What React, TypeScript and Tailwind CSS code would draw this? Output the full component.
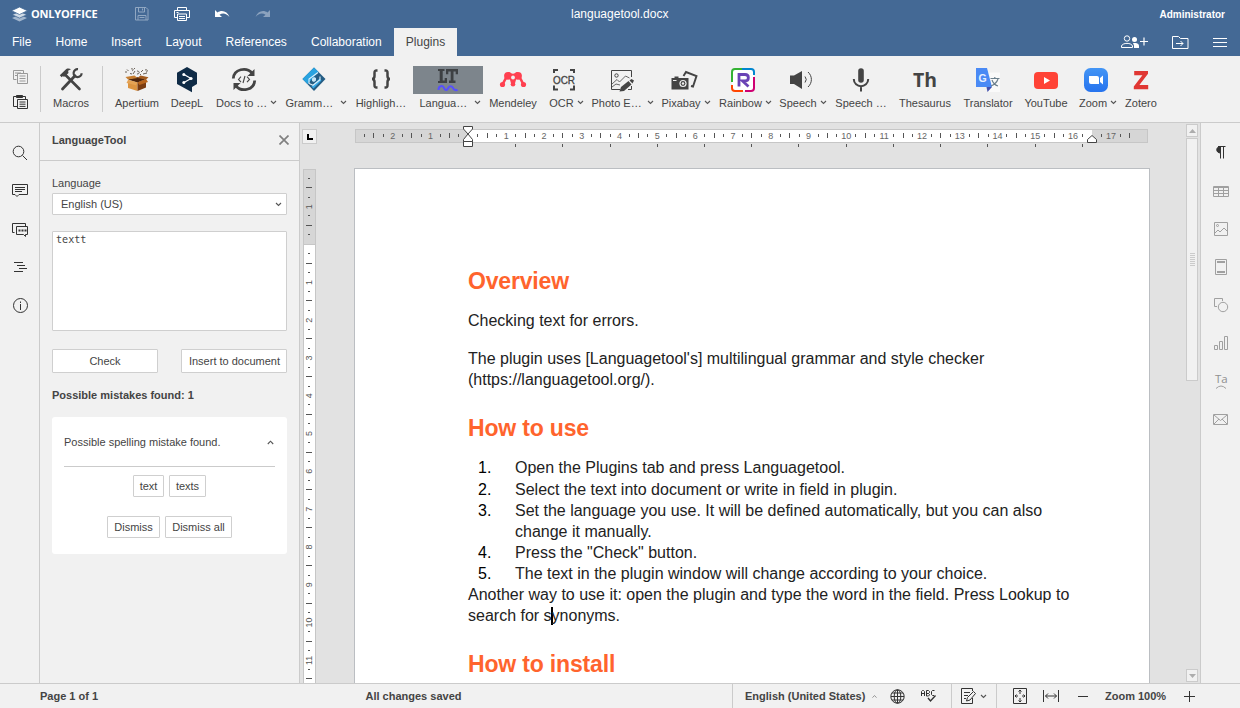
import React from "react";

const CM = 37.795;
const range = (a: number, b: number) => Array.from({ length: b - a + 1 }, (_, i) => a + i);

function Caret({ up = false, className = "" }: { up?: boolean; className?: string }) {
  return (
    <svg width="7" height="5" viewBox="0 0 7 5" className={"shrink-0 " + className} fill="none" stroke="#555" strokeWidth="1.1">
      <path d={up ? "M.8 4 3.5 1.2 6.2 4" : "M1 1 3.5 3.5 6 1"} />
    </svg>
  );
}

const g = "#444444";

const icons: Record<string, React.ReactNode> = {
  macros: (
    <g>
      <path d="M8 8.5 22.500 23" stroke={g} strokeWidth="2.600" strokeLinecap="round" />
      <path d="M2.800 9.200 9.300 2.900c2-.7 3.600-.3 4.700.4l-2.900 1.400.4 2.200-4.200 3.800-1.800-.5-.8 1.100z" fill={g} />
      <path d="M5.500 23 18 9.800" stroke={g} strokeWidth="2.800" strokeLinecap="round" />
      <path d="M21 3.200a4 4 0 1 0 3.600 4" stroke={g} strokeWidth="2.200" fill="none" />
    </g>
  ),
  apertium: (
    <g>
      <path d="M5 14 14.5 16.5V25L5 22z" fill="#dc9440" />
      <path d="M14.5 16.5 23 13v8.5L14.5 25z" fill="#7a3c12" />
      <path d="M5 13.5 13.5 11l9.5 2-8.5 3.5z" fill="#4d250c" />
      <path d="M5 13.5 2.500 11l9-1.500 3 2.500z" fill="#c77f32" />
      <path d="m14.5 12 3-2.500 8 1.700-2.500 2.300z" fill="#a25a1d" />
      <path d="m5 14-1.500 3 9.500 2.300 1.500-2.800z" fill="#e5a354" />
      <path d="m14.5 16.5 2 2.500 8.500-3-2-3z" fill="#b8651d" />
      <path d="M2 6h2M4 3.500l1.500 1.500M8 3c2-1 3 1 1 2M12 5l-2 3M7 7.500l2 .5M14 5c3 0 3 3 0 3M18 6l2-2M22 4c3-1 3 2 1 2M20 8l4-1M17 8l1 1M11 2l1 1" stroke="#6b6259" strokeWidth="1" fill="none" />
    </g>
  ),
  deepl: (
    <g>
      <path d="M14 1 24 6.800V18l-5 3v5.300L14 23.600 4 18V6.800z" fill="#0f2b46" />
      <path d="M11 8.500 18 12.500 11 16.500" stroke="#fff" strokeWidth="1.200" fill="none" />
      <circle cx="10.800" cy="8.400" r="1.500" fill="#fff" /><circle cx="18" cy="12.500" r="1.600" fill="#fff" /><circle cx="10.800" cy="16.600" r="1.500" fill="#fff" />
    </g>
  ),
  docs: (
    <g fill="none" stroke={g}>
      <path d="M3.300 12.500c.5-9.500 13-12 18.700-5.500M24.700 14.500c-.5 9.500-13 12-18.700 5.500" strokeWidth="2.800" />
      <path d="M24.500 3v7h-7zM3.500 24v-7h7z" fill={g} stroke="none" />
      <path d="m11 10.700-2.500 2.700 2.500 2.700M17 10.700l2.500 2.700-2.500 2.700M15 10l-2 7" strokeWidth="1.100" />
    </g>
  ),
  grammar: (
    <g>
      <path d="M14 1.500 25.500 13 14 25 2.500 13z" fill="#245d84" />
      <path d="M14 1.500 18.500 6 7.500 18 2.500 13z" fill="#29a3e0" />
      <path d="M19.500 12.500 11.500 20.500 13.500 22.500 21.500 14.500z" fill="#36a9e8" />
      <path d="M18 6.500 9 13v4.500l4 1.800 7-5.500v-3.300" fill="none" stroke="#dceff9" strokeWidth="1.100" />
      <path d="m14 11 2 1v2.500L14 16l-2-1v-2.500z" fill="#c4e4f4" />
    </g>
  ),
  highlight: (
    <path d="M10.500 4.500H9.500c-2 0-2 1-2 2.500v3c0 2-.5 3-2.500 3 2 0 2.500 1 2.500 3v3c0 1.500 0 2.500 2 2.500h1M17.500 4.500h1c2 0 2 1 2 2.500v3c0 2 .5 3 2.500 3-2 0-2.500 1-2.500 3v3c0 1.500 0 2.500-2 2.500h-1" fill="none" stroke={g} strokeWidth="2.500" />
  ),
  lt: (
    <g>
      <path d="M4 3h6.500v2h-1.800v9.500h2V12h2.300v5H4v-2h1.700V5H4z" fill="#3d4043" />
      <path d="M12 3h12v5.300h-2.300V5.500h-2.200v9h2v2.500h-6.500v-2.500h1.700v-9h-2.400V8.300H12z" fill="#3d4043" />
      <path d="M4.500 24c0-4.500 4-5 5.500-2s3 2.500 4.200 0 3.500-2.500 4.800 0 3.500 2.500 4.500 1.500" stroke="#574fff" strokeWidth="2" fill="none" />
    </g>
  ),
  mendeley: (
    <g fill="#ff4050">
      <path d="M3.500 18.500 8 10M24.500 18.500 20 10M12 12.500 13.500 18M16 12.500 14.500 18" fill="none" stroke="#ff4050" strokeWidth="2.600" />
      <circle cx="9" cy="9.800" r="3.900" /><circle cx="19" cy="9.800" r="3.900" />
      <path d="M9 6c2.500 0 3 1.800 5 1.800S16.500 6 19 6v5c-2 0-2.500 5-5 5s-3-5-5-5z" />
      <circle cx="14" cy="11.500" r="1.900" fill="#f0f0f0" />
      <circle cx="3.500" cy="18.500" r="2.600" /><circle cx="14" cy="18.300" r="2.300" /><circle cx="24.500" cy="18.500" r="2.600" />
    </g>
  ),
  ocr: (
    <g>
      <path d="M4 7V4h4M20 4h4v3M24 19.500V23.500h-4M8 23.500H4v-4" stroke={g} strokeWidth="2" fill="none" />
      <text x="3" y="17.500" textLength="22" lengthAdjust="spacingAndGlyphs" fontFamily="Liberation Sans, sans-serif" fontSize="10" fill={g} stroke={g} strokeWidth=".3">OCR</text>
    </g>
  ),
  photo: (
    <g fill="none" stroke={g}>
      <path d="M12 23.500H3.500V4.500h20V11M23.500 20v3.500H20" strokeWidth="1" />
      <circle cx="8.500" cy="9.500" r="1.700" />
      <path d="m4 18 5-4.500 2.500 2.500 6-6 4 2M4 21l4-3 4 1" strokeWidth=".8" />
      <path d="m11.500 25.500 1.500-4.500 7.500-6 3 3.500-7.500 6.500z" fill={g} stroke="none" />
      <path d="m21.500 14.500 2-1.500 2.500 1.500-1.500 3z" fill={g} stroke="none" />
    </g>
  ),
  pixabay: (
    <g>
      <path d="m13.500 10 2.500-4 10.500 4-3.500 10.500-2-.5" stroke={g} strokeWidth="1.900" fill="none" />
      <path d="M1.500 12h3v-1.500h4V12h10V23.500h-17z" fill={g} />
      <circle cx="13" cy="17.500" r="3.600" fill="#f0f0f0" /><circle cx="13" cy="17.500" r="2.400" fill={g} /><circle cx="13" cy="17.500" r="1.200" fill="#f0f0f0" />
      <path d="M3 14.500h3.500" stroke="#f0f0f0" />
    </g>
  ),
  rainbow: (
    <g fill="none" strokeWidth="2">
      <rect x="3" y="3" width="22" height="22" rx="4" fill="#fff" stroke="none" />
      <path d="M3 16V6a3 3 0 0 1 3-3h7" stroke="#34b233" /><path d="M13 3h9a3 3 0 0 1 3 3v3" stroke="#0086cf" />
      <path d="M25 11v11a3 3 0 0 1-3 3h-6" stroke="#cf0072" /><path d="M14 25H6a3 3 0 0 1-3-3v-3" stroke="#ff4500" />
      <path d="M10 20.500V8.500h6c4.500 0 4.500 6.500 0 6.500h-2.500l6 5.500" stroke="#6a43b5" strokeWidth="2.800" />
    </g>
  ),
  speaker: (
    <g>
      <path d="M3 9.500h4L15 5v18L7 18H3z" fill={g} />
      <path d="M18 10.500q2.500 3 0 6M21 6c4.500 4 4.500 11 0 15" stroke={g} strokeWidth="1" fill="none" />
    </g>
  ),
  mic: (
    <g fill="none" stroke={g}>
      <path d="M14 5v9" strokeWidth="5.600" strokeLinecap="round" />
      <path d="M6.800 13c0 9.500 14.400 9.500 14.400 0M14 20v5.500" strokeWidth="2" />
    </g>
  ),
  th: <text x="2" y="21" textLength="24" lengthAdjust="spacingAndGlyphs" fontFamily="Open Sans, sans-serif" fontSize="20" fontWeight="700" fill={g}>Th</text>,
  translate: (
    <g>
      <path d="M13 6.500h13V26H15z" fill="#fafafa" />
      <path d="M2 2h11l5 19H2z" fill="#4a8af5" />
      <path d="M12.500 21H18l-4.500 5z" fill="#4250af" />
      <text x="4.500" y="15.500" fontFamily="Liberation Sans, sans-serif" fontWeight="700" fontSize="10.500" fill="#e8f0fe">G</text>
      <path d="M16.500 12.500h9M20.800 11v1.500M24 13c-1 3-3.500 5.500-7 7M18 14c1 3 3 5 6 6" stroke="#6b7f8c" strokeWidth="1.200" fill="none" />
    </g>
  ),
  youtube: (
    <g><rect x="2" y="6" width="24" height="17" rx="4" fill="#ff4336" /><path d="m12 11 6 3.500-6 3.500z" fill="#fff" /></g>
  ),
  zoom: (
    <g>
      <defs><linearGradient id="zm" x1="0" y1="0" x2="0" y2="1"><stop stopColor="#4395f5" /><stop offset="1" stopColor="#2673ee" /></linearGradient></defs>
      <rect x="2" y="2" width="24" height="24" rx="6.500" fill="url(#zm)" />
      <path d="M7 10h8q2 0 2 2v6H9q-2 0-2-2zM18 12l3-2.500v9L18 16z" fill="#fff" />
    </g>
  ),
  zotero: <path d="M7.200 5h13.800v2.800l-8.600 11.300h8.800V23.300H6.800v-2.800l8.600-11.300H7.200z" fill="#e03733" />,
};

type Tool = { icon: string; label: string; w: string; lw: string; caret?: boolean; active?: boolean };
const tools: Tool[] = [
  { icon: "apertium", label: "Apertium", w: "w-[56px]", lw: "" },
  { icon: "deepl", label: "DeepL", w: "w-[44px]", lw: "" },
  { icon: "docs", label: "Docs to …", w: "w-[70px]", lw: "ml-[5px] w-[51px]", caret: true },
  { icon: "grammar", label: "Gramm…", w: "w-[70px]", lw: "ml-[4px] w-[51px]", caret: true },
  { icon: "highlight", label: "Highligh…", w: "w-[64px]", lw: "" },
  { icon: "lt", label: "Langua…", w: "w-[70px]", lw: "ml-[4px] w-[51px]", caret: true, active: true },
  { icon: "mendeley", label: "Mendeley", w: "w-[60px]", lw: "" },
  { icon: "ocr", label: "OCR", w: "w-[42px]", lw: "ml-[5px]", caret: true },
  { icon: "photo", label: "Photo E…", w: "w-[74px]", lw: "ml-[1px] w-[52px]", caret: true },
  { icon: "pixabay", label: "Pixabay", w: "w-[50px]", lw: "ml-[4px]", caret: true },
  { icon: "rainbow", label: "Rainbow", w: "w-[68px]", lw: "ml-[5px]", caret: true },
  { icon: "speaker", label: "Speech", w: "w-[48px]", lw: "ml-[4px]", caret: true },
  { icon: "mic", label: "Speech …", w: "w-[72px]", lw: "" },
  { icon: "th", label: "Thesaurus", w: "w-[56px]", lw: "" },
  { icon: "translate", label: "Translator", w: "w-[70px]", lw: "" },
  { icon: "youtube", label: "YouTube", w: "w-[46px]", lw: "" },
  { icon: "zoom", label: "Zoom", w: "w-[54px]", lw: "ml-[4px]", caret: true },
  { icon: "zotero", label: "Zotero", w: "w-[36px]", lw: "" },
];

function ToolButton({ t }: { t: Tool }) {
  return (
    <div className={`${t.w} flex shrink-0 flex-col items-center pt-[10px]`}>
      <div className={`flex h-7 items-center justify-center ${t.active ? "w-[70px] bg-[#7d858c]" : "w-7"}`}>
        <svg width="28" height="28" viewBox="0 0 28 28">{icons[t.icon]}</svg>
      </div>
      <div className="mt-[2px] flex items-center gap-[3px] whitespace-nowrap text-[11px] leading-[14px] text-[#444]">
        <span className={t.lw}>{t.label}</span>
        {t.caret && <Caret className="-mt-px" />}
      </div>
    </div>
  );
}

function Header() {
  return (
    <header className="flex h-14 shrink-0 flex-col bg-[#446995] text-white">
      <div className="grid h-7 grid-cols-[571px_1fr_auto] items-center pr-[15px]">
        <div className="flex items-center pl-[12px]">
          <svg width="16" height="15" viewBox="0 0 16 15">
            <path d="m7.500 7.800 7.500 3.100-7.500 3.500L0 10.900z" fill="#a4b7ce" />
            <path d="m7.500 4.500 7.500 3.200-7.500 3.400L0 7.700z" fill="#cfdae6" stroke="#446995" strokeWidth=".8" />
            <path d="M7.500 0 15.500 3.700 7.500 7.500-.5 3.700z" fill="#fff" stroke="#446995" strokeWidth=".8" />
          </svg>
          <span className="ml-[3px] w-[104px] font-['Open_Sans',sans-serif] text-[11px] font-bold leading-[14px] tracking-[-0.2px]">ONLYOFFICE</span>
          <svg width="14" height="14" viewBox="0 0 14 14" fill="none" stroke="#90a7c2">
            <path d="M.500.500h10.500l2 2v10.500H.500zM3.500 1v4h6V1M7.500 1.500v2M3 13V8.500h8V13M4.500 10.500h5" />
          </svg>
          <svg width="16" height="14" viewBox="0 0 16 14" fill="none" stroke="#fff" className="ml-[25px]">
            <path d="M3.500 3.500v-3h9v3M3.500 10.500h-3v-7h15v7h-3M3.500 7h9v6.500h-9zM5 9.500h6M5 11.500h6M2.500 5.500h2" />
          </svg>
          <svg width="15" height="10" viewBox="0 0 15 10" className="ml-[25px] mt-[2px]"><path d="M0 0v7h7L4.500 4.700C8 2.200 11.500 3.500 14.500 7 12.500 1 6.500-.5 2.500 2.500z" fill="#fff" /></svg>
          <svg width="15" height="10" viewBox="0 0 15 10" className="ml-[25px] mt-[2px]"><path d="M15 0v7H8l2.500-2.300C7 2.200 3.500 3.500.5 7 2.500 1 8.500-.5 12.500 2.500z" fill="#8ba2be" /></svg>
        </div>
        <span className="text-[12px]">languagetool.docx</span>
        <span className="text-[10px] font-bold">Administrator</span>
      </div>
      <div className="flex h-7 items-center text-[12px]">
        <span className="w-[43px] pl-[12px]">File</span>
        <span className="w-[68px] pl-[12.500px]">Home</span>
        <span className="w-[54.500px]">Insert</span>
        <span className="w-[60px]">Layout</span>
        <span className="w-[85.500px]">References</span>
        <span className="w-[83px]">Collaboration</span>
        <span className="flex h-7 w-[63px] items-center justify-center bg-[#f1f1f1] text-[#444]">Plugins</span>
        <div className="flex-1" />
        <svg width="28" height="14" viewBox="0 0 28 14" fill="none" stroke="#fff">
          <circle cx="6" cy="3.500" r="2.700" /><path d="M.500 12.500v-1.500c1-3.500 10-3.500 11 0v1.500z" />
          <circle cx="13.500" cy="4.500" r="2.500" fill="#fff" stroke="none" /><path d="M12 8h3q3 .5 3 3v2h-5v-2.500z" fill="#fff" stroke="none" />
          <path d="M19 6.500h8M23 2.500v8" strokeWidth="1.200" />
        </svg>
        <svg width="17" height="14" viewBox="0 0 17 14" fill="none" stroke="#fff" className="ml-[23px] mt-px">
          <path d="M.5 12.500V.500h6l2 2h7.500v10z" /><path d="M4 7.500h7M8.500 5 11 7.500 8.500 10" />
        </svg>
        <svg width="15" height="11" viewBox="0 0 15 11" stroke="#fff" className="ml-[24px] mr-[12px]"><path d="M0 1.500h14M0 5.500h14M0 9.500h14" /></svg>
      </div>
    </header>
  );
}

function Toolbar() {
  return (
    <div className="flex h-[67px] shrink-0 border-b border-[#cbcbcb] bg-[#f1f1f1]">
      <div className="flex w-[40px] flex-col items-center gap-[11px] pt-[14px]">
        <svg width="15" height="14" viewBox="0 0 15 14" fill="none" stroke="#999"><path d="M3.500 9.500h-3v-9h10v3M4.500 3.500h10v10h-10zM2 3h6M2 5.500h2M6.500 6h6M6.500 8.500h6M6.500 11h6" /></svg>
        <svg width="15" height="15" viewBox="0 0 15 15" fill="none" stroke="#333"><path d="M4 11.500H.5v-10H3M10 1.500h2.500V4M4.500 4.500h10v9H4.500zM6.500 7h6M6.500 9.200h6M6.500 11.400h6" /><path d="M3.500.500h6v2h-6z" fill="#333" /></svg>
      </div>
      <div className="mt-[10px] h-[46px] w-px bg-[#cbcbcb]" />
      <div className="flex w-[61px] justify-center pr-px"><ToolButton t={{ icon: "macros", label: "Macros", w: "w-[56px]", lw: "" }} /></div>
      <div className="mr-[6px] mt-[10px] h-[46px] w-px bg-[#cbcbcb]" />
      {tools.map((t) => <ToolButton key={t.icon} t={t} />)}
    </div>
  );
}

function Cell({ children }: { children: React.ReactNode }) {
  return <div className="flex h-[38px] items-center justify-center">{children}</div>;
}

function LeftBar() {
  return (
    <nav className="w-[40px] shrink-0 border-r border-[#cbcbcb] bg-[#f1f1f1] pt-[12px]">
      {[
        <g key="a"><circle cx="8.500" cy="7.500" r="5.300" /><path d="m12.500 11.500 4.500 4.500" /></g>,
        <g key="b"><path d="M2.500 2.500h15v10H9l-2 2-2-2H2.500zM5 5.500h10M5 7.500h10M5 9.500h7" /></g>,
        <g key="c"><path d="M4.500 12.500h-2v-9h13v3M6.500 6.500h11v8h-2v2l-2-2h-7z" /><path d="M8.500 10.500h8" strokeWidth="2" strokeDasharray="2 1" /></g>,
        <g key="d"><path d="M4 4.500h9M7 7.500h8M9 10.500h8M4 13.500h9" /></g>,
        <g key="e"><circle cx="10.500" cy="9.500" r="7" /><path d="M10.500 8v6M10.500 5.500V7" /></g>,
      ].map((x, i) => (
        <Cell key={i}><svg width="20" height="20" viewBox="0 0 20 20" fill="none" stroke="#333">{x}</svg></Cell>
      ))}
    </nav>
  );
}

function Btn({ className, children }: { className: string; children: React.ReactNode }) {
  return <button className={"flex items-center justify-center whitespace-nowrap rounded-[1px] border border-[#cfcfcf] bg-white " + className}>{children}</button>;
}

function Panel() {
  return (
    <aside className="w-[260px] shrink-0 border-r border-[#cbcbcb] bg-[#f1f1f1] text-[11px] text-[#444]">
      <div className="flex h-[38px] items-center justify-between border-b border-[#cbcbcb] pb-[3px] pl-[12px] pr-[10px] font-bold">
        LanguageTool
        <svg width="10" height="10" viewBox="0 0 10 10" stroke="#808080" strokeWidth="1.700"><path d="m.500.500 9 9M9.500.500l-9 9" /></svg>
      </div>
      <div className="flex flex-col px-[12px] pt-[15px]">
        <div className="h-[17px] leading-[15px]">Language</div>
        <div className="flex h-[22px] w-[235px] items-center justify-between rounded-[1px] border border-[#cfcfcf] bg-white pl-[8px] pr-[4px]">English (US)<Caret /></div>
        <div className="mt-[16px] h-[100px] w-[235px] rounded-[1px] border border-[#cfcfcf] bg-white px-[3px] pt-px font-['DejaVu_Sans_Mono',monospace] text-[10.100px] leading-[14px]">textt</div>
        <div className="mt-[18px] flex w-[235px] justify-between">
          <Btn className="h-[24px] w-[106px]">Check</Btn>
          <Btn className="h-[24px] w-[106px] pl-px">Insert to document</Btn>
        </div>
        <div className="mt-[15px] h-[29px] font-bold leading-[15px]">Possible mistakes found: 1</div>
        <div className="h-[137px] w-[235px] rounded-[3px] bg-white px-[12px]">
          <div className="flex h-[50px] items-center justify-between border-b border-[#cbcbcb] pt-[2px]">Possible spelling mistake found.<Caret up className="mr-px" /></div>
          <div className="mt-[8px] flex justify-center gap-[5px]"><Btn className="h-[22px] w-[31px]">text</Btn><Btn className="h-[22px] w-[37px]">texts</Btn></div>
          <div className="mt-[19px] flex justify-center gap-[5px]"><Btn className="h-[22px] w-[53px]">Dismiss</Btn><Btn className="h-[22px] w-[67px]">Dismiss all</Btn></div>
        </div>
      </div>
    </aside>
  );
}

function HRuler() {
  const z = 113.4;
  return (
    <svg width="800" height="32" viewBox="0 0 800 32" shapeRendering="crispEdges" className="shrink-0">
      <rect x=".5" y="6.500" width="792" height="13" fill="#d6d6d6" stroke="#c6c6c6" />
      <rect x="113" y="7" width="624" height="12" fill="#fff" />
      {range(-11, 70).filter((i) => i !== 0 && i !== 66).map((i) => {
        const x = Math.round(z + (i * CM) / 4 - 0.5);
        if (i % 4 === 0) return <text key={i} x={z + (i * CM) / 4} y="16" textAnchor="middle" fontFamily="Liberation Sans, sans-serif" fontSize="9" fill="#666">{Math.abs(i / 4)}</text>;
        return i % 2 === 0 ? <rect key={i} x={x} y="10" width="1" height="5" fill="#555" /> : <rect key={i} x={x} y="11" width="1" height="3" fill="#555" />;
      })}
      {range(1, 13).map((i) => <rect key={i} x={Math.round(z + i * 47.220 - 0.5)} y="21" width="1" height="3" fill="#555" />)}
      <g fill="#fff" stroke="#444" shapeRendering="auto">
        <path d="M108.500 3.500h9v2.500l-4.500 5-4.500-5zM108.500 18.500v-2l4.500-5.500 4.500 5.500v2zM108.500 18.500h9v5h-9z" />
        <path d="M732.500 19.500v-3l4.500-4 4.500 4v3z" />
      </g>
    </svg>
  );
}

function VRuler() {
  const z = 75.600;
  return (
    <svg width="13" height="515" viewBox="0 0 13 515" shapeRendering="crispEdges" className="shrink-0">
      <rect x=".5" y=".5" width="12" height="520" fill="#fff" stroke="#c6c6c6" />
      <rect x="1" y="1" width="11" height="75" fill="#d6d6d6" /><rect y="75" width="13" height="1" fill="#c6c6c6" />
      {range(-7, 46).filter((i) => i !== 0).map((i) => {
        const y = z + (i * CM) / 4;
        if (i % 4 === 0) return <text key={i} x="0" y="0" transform={`translate(9 ${y}) rotate(-90)`} textAnchor="middle" fontFamily="Liberation Sans, sans-serif" fontSize="9" fill="#555">{Math.abs(i / 4)}</text>;
        return i % 2 === 0 ? <rect key={i} x="3" y={Math.round(y - 0.8)} width="6" height="1" fill="#555" /> : <rect key={i} x="5" y={Math.round(y - 0.8)} width="2" height="1" fill="#555" />;
      })}
    </svg>
  );
}

const steps = [
  ["Open the Plugins tab and press Languagetool."],
  ["Select the text into document or write in field in plugin."],
  ["Set the language you use. It will be defined automatically, but you can also", "change it manually."],
  ["Press the \"Check\" button."],
  ["The text in the plugin window will change according to your choice."],
];

function Heading({ children, className = "" }: { children: React.ReactNode; className?: string }) {
  return <h1 className={"whitespace-nowrap text-[23px] font-bold leading-[28px] tracking-[-0.17px] text-[#ff642d] " + className}>{children}</h1>;
}

function Editor() {
  return (
    <main className="flex w-[900px] shrink-0 bg-[#e2e2e2]">
      <div className="flex w-[886px] flex-col overflow-hidden">
        <div className="flex h-[45px] shrink-0">
          <div className="ml-[2px] mr-[38px] mt-[6px] flex h-[15px] w-[15px] items-center justify-center border border-[#cbcbcb] bg-[#f1f1f1] pl-px pt-px">
            <svg width="6" height="6" viewBox="0 0 6 6"><path d="M1 0v5h5" fill="none" stroke="#000" strokeWidth="2" /></svg>
          </div>
          <HRuler />
        </div>
        <div className="flex min-h-0 flex-1">
          <div className="ml-[3px] pt-px"><VRuler /></div>
          <article className="ml-[38px] w-[796px] shrink-0 border-x border-t border-[#bbbec2] bg-white pl-[113px] pt-[98px] text-[16px] leading-[21.120px] text-[#222]">
            <Heading>Overview</Heading>
            <p className="mt-[15px]">Checking text for errors.</p>
            <p className="mt-[17px] whitespace-nowrap">The plugin uses [Languagetool's] multilingual grammar and style checker<br />(https://languagetool.org/).</p>
            <Heading className="mt-[24px]">How to use</Heading>
            <ol className="mt-[15px]">
              {steps.map((lines, i) => (
                <li key={i} className="flex whitespace-nowrap">
                  <span className="w-[47px] pl-[10px] text-black">{i + 1}.</span>
                  <span>{lines.map((l) => <span key={l} className="block">{l}</span>)}</span>
                </li>
              ))}
            </ol>
            <p className="whitespace-nowrap">Another way to use it: open the plugin and type the word in the field. Press Lookup to<br />search for s<span className="-mx-px inline-block h-[18px] w-[2px] bg-black align-[-4px]" />ynonyms.</p>
            <Heading className="mt-[24px]">How to install</Heading>
          </article>
        </div>
      </div>
      <div className="flex w-[14px] flex-col pr-[2px] pt-px">
        <div className="flex h-[13px] items-center justify-center border border-[#cbcbcb] bg-[#f1f1f1]"><svg width="7" height="4"><path d="M0 4 3.500 0 7 4z" fill="#adadad" /></svg></div>
        <div className="mt-px flex h-[243px] flex-col items-center justify-center gap-px border border-[#cbcbcb] bg-[#f1f1f1]">
          {range(1, 7).map((i) => <div key={i} className="h-px w-[5px] bg-[#cbcbcb]" />)}
        </div>
        <div className="flex-1" />
        <div className="mb-px flex h-[13px] items-center justify-center border border-[#cbcbcb] bg-[#f1f1f1]"><svg width="7" height="4"><path d="M0 0h7L3.500 4z" fill="#adadad" /></svg></div>
      </div>
    </main>
  );
}

function RightBar() {
  return (
    <nav className="w-[40px] shrink-0 border-l border-[#cbcbcb] bg-[#f1f1f1] pt-[11px]">
      {[
        <g key="a" stroke="#333"><path d="M7 3.500h7.500M9.500 3.500v12M12.500 3.500v12" /><path d="M9.500 3.500v6.500c-5 0-5-6.500 0-6.500z" fill="#333" /></g>,
        <g key="b"><path d="M2.500 5.500h15v10h-15zM2 9.500h16M2 12.500h16M7.500 6v10M12.500 6v10M2 6.500h16" /></g>,
        <g key="c"><path d="M3.500 3.500h13v13h-13zM4 14l3-3 2 2 4-4 3.500 3.500" /><circle cx="6.500" cy="6.500" r="1" /></g>,
        <g key="d"><path d="M4.500 2.500h11v15h-11z" /><path d="M6 5h8M6 15h8" strokeWidth="2" /></g>,
        <g key="e"><path d="M6 11.500H3.500v-8h8V6" /><circle cx="12" cy="12" r="4.700" /></g>,
        <g key="f"><path d="M3.500 12.500h3v4h-3zM8.500 8.500h3v8h-3zM13.500 3.500h3v13h-3z" /></g>,
        <g key="g"><text x="4" y="12" fontFamily="Open Sans, sans-serif" fontSize="11.500" fill="#8f8f8f" stroke="none">Ta</text><path d="M5 17.500q5-5 10 0" /></g>,
        <g key="h"><path d="M2.500 5.500h14v10h-14zM3 6l6.500 5.500L16 6M3 15l5-5M16 15l-5-5" /></g>,
      ].map((x, i) => (
        <Cell key={i}><svg width="20" height="20" viewBox="0 0 20 20" fill="none" stroke="#a0a0a0" className="overflow-visible">{x}</svg></Cell>
      ))}
    </nav>
  );
}

function StatusBar() {
  return (
    <footer className="flex h-[25px] shrink-0 items-center whitespace-nowrap border-t border-[#cbcbcb] bg-[#f1f1f1] text-[11px] font-bold text-[#444]">
      <span className="w-[365.500px] pl-[40px]">Page 1 of 1</span>
      <span className="w-[366.500px]">All changes saved</span>
      <div className="flex h-6 w-[219px] items-center border-l border-[#cbcbcb] pl-[12px]">
        <span className="w-[126px]">English (United States)</span>
        <Caret up className="scale-75 opacity-70" />
        <svg width="15" height="15" viewBox="0 0 15 15" fill="none" stroke="#333" className="ml-[12px]"><circle cx="7.500" cy="7.500" r="6.700" /><ellipse cx="7.500" cy="7.500" rx="3.300" ry="6.700" /><path d="M7.500 1v13M1 7.500h13M2 4h11M2 11h11" /></svg>
        <svg width="16" height="14" viewBox="0 0 16 14" fill="none" stroke="#333" className="ml-[16px]"><path d="M.5 7V2.500l1-1h1l1 1V7M.5 4.500h3M5.500 7V1.500h2l1 1v1l-1 1h-2 2l1 1v.500l-1 1h-2M13.500 1.500h-2l-1 1V5.500l1 1H13" /><path d="m7 9 2.500 3L14.500 6.500" strokeWidth="1.400" /></svg>
      </div>
      <div className="flex h-6 w-[45px] items-center border-l border-[#cbcbcb] pl-[9px]">
        <svg width="16" height="16" viewBox="0 0 16 16" fill="none" stroke="#333"><path d="M11.500 10v5.500H.500V.500h11V3M3 4.500h6M3 7.500h4M3 10.500h2M5.500 13l1-3.500L12.500 3.500l2 2L9 12z" /></svg>
        <Caret className="ml-[3px]" />
      </div>
      <div className="flex h-6 flex-1 items-center border-l border-[#cbcbcb] pl-[16px]">
        <svg width="14" height="16" viewBox="0 0 14 16" fill="none" stroke="#333"><path d="M.5.500h13v15H.500zM7 2v4M7 10v4M2 8h3M9 8h3M5.500 3.500 7 2l1.500 1.500M5.500 12.500 7 14l1.500-1.500M3.500 6.500 2 8l1.500 1.500M10.500 6.500 12 8l-1.500 1.500" /></svg>
        <svg width="16" height="12" viewBox="0 0 16 12" fill="none" stroke="#333" className="ml-[16px]"><path d="M.500 0v12M15.500 0v12M2.500 6h11M5 3.500 2.500 6 5 8.500M11 3.500 13.500 6 11 8.500" /></svg>
        <svg width="10" height="11" viewBox="0 0 10 11" stroke="#333" className="ml-[19px]"><path d="M0 5.500h10" /></svg>
        <span className="ml-[17px] w-[79px]">Zoom 100%</span>
        <svg width="11" height="11" viewBox="0 0 11 11" stroke="#333"><path d="M0 5.500h11M5.500 0v11" /></svg>
      </div>
    </footer>
  );
}

export default function App() {
  return (
    <div className="flex h-[708px] w-[1240px] flex-col overflow-hidden bg-[#f1f1f1] font-['Liberation_Sans',Arial,sans-serif]">
      <Header />
      <Toolbar />
      <div className="flex h-[560px] shrink-0">
        <LeftBar />
        <Panel />
        <Editor />
        <RightBar />
      </div>
      <StatusBar />
    </div>
  );
}
